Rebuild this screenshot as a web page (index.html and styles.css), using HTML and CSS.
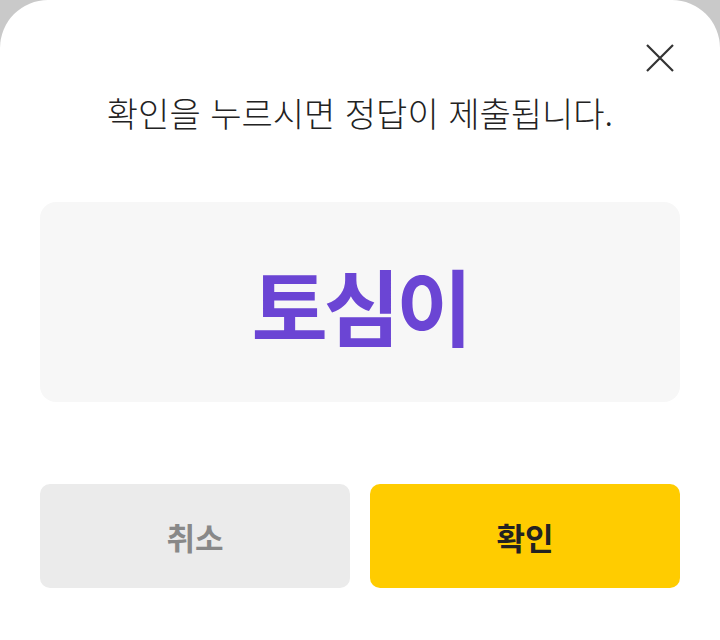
FILE: index.html
```html
<!DOCTYPE html>
<html lang="ko">
<head>
  <title>정답 제출</title>
  <meta name="viewport" content="width=device-width, initial-scale=1.0">
  <link rel="stylesheet" href="styles.css">
</head>
<body>
  <div class="sheet">
    <div class="sheet-top">
      <button class="close-btn" aria-label="닫기">
        <svg width="28" height="28" viewBox="0 0 28 28">
          <path d="M1 1 L27 27 M27 1 L1 27" stroke="#333" stroke-width="2.2" fill="none"/>
        </svg>
      </button>
    </div>

    <p class="notice">확인을 누르시면 정답이 제출됩니다.</p>

    <div class="answer-box">
      <span class="answer">토심이</span>
    </div>

    <div class="btn-group">
      <button class="btn btn-cancel">취소</button>
      <button class="btn btn-confirm">확인</button>
    </div>
  </div>
</body>
</html>
```

FILE: styles.css
```css
* {
  margin: 0;
  padding: 0;
  box-sizing: border-box;
}

body {
  font-family: "Noto Sans CJK KR", "Noto Sans", sans-serif;
  background: #c9c9c9;
  height: 640px;
  overflow: hidden;
}

.sheet {
  background: white;
  border-radius: 48px 48px 0 0;
  height: 640px;
  padding: 0 40px;
}

.sheet-top {
  display: flex;
  justify-content: flex-end;
  padding-top: 44px;
  padding-right: 6px;
  height: 88px;
}

.close-btn {
  border: none;
  background: none;
  width: 28px;
  height: 28px;
  cursor: pointer;
}

.close-btn svg {
  display: block;
}

.notice {
  text-align: center;
  font-size: 34px;
  font-weight: 300;
  color: #222;
  letter-spacing: 0;
  line-height: 50px;
}

.answer-box {
  margin-top: 64px;
  height: 200px;
  background: #f7f7f7;
  border-radius: 16px;
  display: flex;
  align-items: center;
  justify-content: center;
}

.answer {
  font-size: 83px;
  font-weight: 700;
  color: #6b45d4;
  letter-spacing: -4px;
  padding-top: 4px;
}

.btn-group {
  display: flex;
  gap: 20px;
  margin-top: 82px;
}

.btn {
  flex: 1;
  height: 104px;
  border: none;
  border-radius: 10px;
  font-family: inherit;
  font-size: 31px;
  font-weight: 700;
  cursor: pointer;
}

.btn-cancel {
  background: #ebebeb;
  color: #888;
}

.btn-confirm {
  background: #ffcc00;
  color: #222;
}
```
